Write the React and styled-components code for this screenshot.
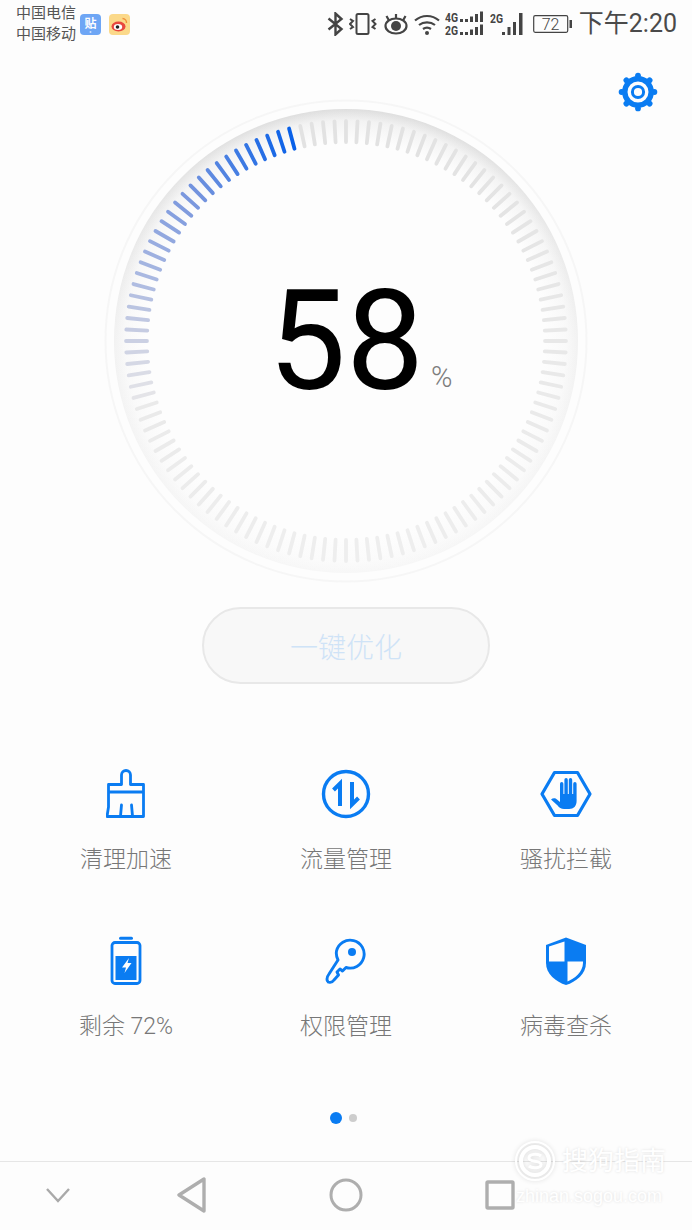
import React from "react";
import styled, { createGlobalStyle } from "styled-components";

const BLUE = "#0a7cf2";
const CJK = `Roboto, "Noto Sans CJK SC", sans-serif`;

const Global = createGlobalStyle`
  html, body { margin: 0; padding: 0; background: #fdfdfd; }
  body { font-family: ${CJK}; }
`;

const Page = styled.div`
  position: relative;
  width: 692px;
  height: 1230px;
  background: #fdfdfd;
  overflow: hidden;
  display: flex;
  flex-direction: column;
`;

const StatusBar = styled.header`
  height: 48px;
  flex: none;
  display: flex;
  align-items: center;
  padding: 0 15px 0 16px;
  color: #444;
`;
const Carriers = styled.div`
  font-size: 15px;
  line-height: 21px;
  color: #555;
  margin-right: 4px;
`;
const AppBadge = styled.div`
  width: 21px;
  height: 21px;
  margin-right: 8px;
`;
const StatusRight = styled.div`
  margin-left: auto;
  display: flex;
  align-items: center;
`;
const Time = styled.span`
  font-size: 25px;
  line-height: 48px;
  color: #4a4a4a;
  margin-left: 7px;
  white-space: nowrap;
`;

const SettingsRow = styled.div`
  height: 50px;
  flex: none;
  display: flex;
  justify-content: flex-end;
  align-items: center;
  padding: 0 34px 0 0;
  margin-top: 19px;
  margin-bottom: -20px;
  position: relative;
  z-index: 1;
`;

const Gauge = styled.div`
  width: 484px;
  height: 484px;
  flex: none;
  align-self: center;
  position: relative;
  margin-top: 2px;
`;
const GaugeValue = styled.div`
  position: absolute;
  left: 0;
  right: 0;
  top: 0;
  bottom: 0;
  display: flex;
  justify-content: center;
  align-items: center;
`;
const Number = styled.span`
  font-family: Roboto, sans-serif;
  font-weight: 400;
  font-size: 139px;
  line-height: 1;
  color: #000;
`;
const Percent = styled.span`
  position: absolute;
  left: 327px;
  top: 264px;
  font-size: 29px;
  font-weight: 300;
  line-height: 1;
  color: #7c7c7c;
`;

const Optimize = styled.button`
  align-self: center;
  margin-top: 24px;
  width: 288px;
  height: 77px;
  flex: none;
  border-radius: 39px;
  border: 2px solid #e8e8e8;
  background: #f8f8f8;
  color: #cfe3f7;
  font-family: ${CJK};
  font-size: 28px;
  font-weight: 300;
  padding: 0;
`;

const Grid = styled.div`
  display: grid;
  grid-template-columns: repeat(3, 220px);
  justify-content: center;
  grid-auto-rows: 167px;
  margin-top: 80px;
`;
const Tile = styled.div`
  display: flex;
  flex-direction: column;
  align-items: center;
`;
const IconBox = styled.div`
  width: 60px;
  height: 60px;
  display: flex;
  align-items: center;
  justify-content: center;
`;
const Label = styled.div`
  margin-top: 20px;
  font-size: 23px;
  line-height: 32px;
  color: #777;
  font-weight: 300;
  white-space: nowrap;
`;

const Dots = styled.div`
  display: flex;
  justify-content: center;
  align-items: center;
  gap: 7px;
  margin-top: 14px;
  height: 12px;
  padding-right: 5px;
`;
const Dot = styled.span`
  display: block;
  width: ${(p) => (p.$active ? 12 : 8)}px;
  height: ${(p) => (p.$active ? 12 : 8)}px;
  border-radius: 50%;
  background: ${(p) => (p.$active ? BLUE : "#cdcdcd")};
`;

const NavBar = styled.nav`
  margin-top: auto;
  height: 69px;
  flex: none;
  border-top: 1px solid #e6e6e6;
  display: grid;
  grid-template-columns: 115px 154px 154px 154px 115px;
  align-items: center;
  justify-items: center;
  padding-bottom: 2px;
  box-sizing: border-box;
`;

const Watermark = styled.div`
  position: absolute;
  left: 514px;
  top: 1140px;
  width: 160px;
  color: #fff;
  text-shadow: 0 0 3px rgba(0,0,0,.13);
  pointer-events: none;
`;
const WmTop = styled.div`
  display: flex;
  align-items: center;
  gap: 6px;
  font-size: 26px;
  line-height: 40px;
`;
const WmUrl = styled.div`
  font-family: "Liberation Sans", sans-serif;
  font-size: 18px;
  line-height: 20px;
  margin-top: 4px;
  margin-left: 2px;
  white-space: nowrap;
`;

function GaugeArt() {
  const c = 242;
  const ticks = [];
  for (let i = 0; i < 120; i++) {
    const deg = i * 3;
    const from = 255;
    const to = 345;
    const sin = Math.sin((deg * Math.PI) / 180);
    const cos = Math.cos((deg * Math.PI) / 180);
    const grey = Math.round(226 + (1 - cos) * 0.5 * 12);
    let stroke = `rgb(${grey},${grey},${grey})`;
    if (deg >= from && deg <= to) {
      const t = (deg - from) / (to - from);
      const s = [228, 228, 232], a = [198, 204, 226], m = [120, 150, 222], e = [8, 96, 232];
      let mix;
      if (t < 0.2) mix = s.map((v, k) => v + (a[k] - v) * (t / 0.2));
      else if (t < 0.65) mix = a.map((v, k) => v + (m[k] - v) * ((t - 0.2) / 0.45));
      else mix = m.map((v, k) => v + (e[k] - v) * ((t - 0.65) / 0.35));
      stroke = `rgb(${mix.map(Math.round).join(",")})`;
    }
    ticks.push(
      <line
        key={i}
        x1={c + 199 * sin}
        y1={c - 199 * cos}
        x2={c + 220 * sin}
        y2={c - 220 * cos}
        stroke={stroke}
        strokeWidth="3.8"
        strokeLinecap="round"
      />
    );
  }
  return (
    <svg width="484" height="484" viewBox="0 0 484 484" style={{ display: "block" }}>
      <defs>
        <linearGradient id="band" x1="0" y1="0" x2="0" y2="1">
          <stop offset="0" stopColor="#dedede" />
          <stop offset="0.5" stopColor="#f2f2f2" />
          <stop offset="1" stopColor="#f7f7f7" />
        </linearGradient>
        <radialGradient id="fade" cx="0.5" cy="0.5" r="0.5">
          <stop offset="0.86" stopColor="#fdfdfd" stopOpacity="1" />
          <stop offset="0.95" stopColor="#fdfdfd" stopOpacity="0.65" />
          <stop offset="1" stopColor="#fdfdfd" stopOpacity="0" />
        </radialGradient>
      </defs>
      <circle cx={c} cy={c} r="240.5" fill="none" stroke="#f6f6f6" strokeWidth="2" />
      <circle cx={c} cy={c} r="232" fill="url(#band)" />
      <circle cx={c} cy={c} r="232" fill="url(#fade)" />
      {ticks}
    </svg>
  );
}

const Gear = () => (
  <svg width="40" height="40" viewBox="0 0 40 40">
    <g fill={BLUE}>
      {[0, 45, 90, 135, 180, 225, 270, 315].map((a) => (
        <circle key={a} cx="20" cy="3.6" r="2.9" transform={`rotate(${a} 20 20)`} />
      ))}
    </g>
    <circle cx="20" cy="20" r="13.2" fill="none" stroke={BLUE} strokeWidth="5.4" />
    <circle cx="20" cy="20" r="5.6" fill="none" stroke={BLUE} strokeWidth="3" />
  </svg>
);

const Broom = () => (
  <svg width="40" height="50" viewBox="0 0 40 50" fill="none" stroke={BLUE} strokeWidth="2.8" strokeLinejoin="round" strokeLinecap="round">
    <path d="M2.500 23V15.500H15.500V6a4.500 4.500 0 0 1 9 0V15.500H37.500V47.500H1L2.500 38V23H37.500" />
    <path d="M15.500 36L14.500 47M25.500 36L26.500 47" />
  </svg>
);

const Traffic = () => (
  <svg width="50" height="50" viewBox="0 0 50 50" fill="none" stroke={BLUE}>
    <circle cx="25" cy="25" r="22.500" strokeWidth="3.400" />
    <path d="M19 37V14.500L12.500 21" strokeWidth="4" />
    <path d="M31 13V35.500L37.500 29" strokeWidth="4" />
  </svg>
);

const HandShield = () => (
  <svg width="52" height="48" viewBox="0 0 52 48">
    <path d="M14.500 2.500H37.500L50 24 37.500 45.500H14.500L2 24Z" fill="none" stroke={BLUE} strokeWidth="3.200" strokeLinejoin="round" />
    <path fill={BLUE} d="M20 13.700a1.700 1.700 0 0 1 3.400 0V24h1V9.700a1.700 1.700 0 0 1 3.400 0V24h1V9.700a1.700 1.700 0 0 1 3.400 0V24h1V13.700a1.700 1.700 0 0 1 3.400 0V31c0 5-3 8-7.500 8h-5c-3 0-5-1.500-6.500-3.500L11 29.500c2-1.800 4.500-1.500 6 0L20 32Z" />
  </svg>
);

const Battery = () => (
  <svg width="32" height="50" viewBox="0 0 32 50" fill="none">
    <path d="M10.500 2.200H21.500" stroke={BLUE} strokeWidth="3" strokeLinecap="round" />
    <rect x="2" y="6.500" width="28" height="41" rx="3" stroke={BLUE} strokeWidth="2.800" />
    <rect x="5.500" y="20" width="21" height="24" fill={BLUE} />
    <path d="M19 22L12 31.500H16L14.500 37 21.500 27H17.500Z" fill="#fdfdfd" />
  </svg>
);

const Key = () => (
  <svg width="42" height="50" viewBox="0 0 42 50" fill="none" stroke={BLUE} strokeWidth="2.900" strokeLinejoin="round">
    <path d="M11.500 15A14 14 0 1 1 21 31.500L17.500 35 15 33 12 36 13.500 39 9 44C7 47 3 47 2.500 45 1.500 43 2.500 40 4 38L13 24C11.500 21 11 18 11.500 15Z" />
    <circle cx="27" cy="16" r="4" fill={BLUE} stroke="none" />
  </svg>
);

const Shield = () => (
  <svg width="42" height="50" viewBox="0 0 42 50">
    <path fill={BLUE} d="M21 1.500L41 9V27C41 38 31 46 21 49 11 46 1 38 1 27V9Z" />
    <path fill="#fdfdfd" d="M19.500 5.500V25.500H4V10.500ZM22.500 25.500H38V27C38 36 29 43 22.500 45.500Z" />
  </svg>
);

const Tieba = () => (
  <AppBadge>
    <svg width="21" height="21" viewBox="0 0 21 21">
      <rect width="21" height="21" rx="4" fill="#6ea6f5" />
      <text x="10.500" y="13.500" fontSize="12" textAnchor="middle" fill="#fff" fontFamily='"Noto Sans CJK SC"' fontWeight="700">贴</text>
      <circle cx="10.500" cy="18" r="1" fill="#cfe0fb" />
    </svg>
  </AppBadge>
);

const Weibo = () => (
  <AppBadge>
    <svg width="21" height="21" viewBox="0 0 21 21">
      <rect width="21" height="21" rx="4" fill="#fbd98a" />
      <ellipse cx="9.500" cy="12.500" rx="7" ry="5" fill="#e8473f" />
      <ellipse cx="9" cy="13" rx="4.200" ry="3" fill="#fff" />
      <circle cx="8.500" cy="13" r="1.800" fill="#222" />
      <path d="M13.500 4.500a4 4 0 0 1 4 4.500" fill="none" stroke="#f0913c" strokeWidth="1.400" />
    </svg>
  </AppBadge>
);

const Ic = styled.svg`
  display: block;
  flex: none;
  margin-left: ${(p) => p.$ml || 0}px;
`;

const NetLabel = ({ y, children }) => (
  <text x="0" y={y} fontSize="12" fontWeight="700" fill="#444" fontFamily="Roboto" textLength="13" lengthAdjust="spacingAndGlyphs">{children}</text>
);

const StatusIcons = () => (
  <>
    <Ic width="17" height="24" viewBox="0 0 17 24" fill="none" stroke="#444" strokeWidth="2.400">
      <path d="M1.500 6.500L14.500 17 8.500 22.500V1.500L14.500 7 1.500 17.500" />
    </Ic>
    <Ic $ml={5} width="28" height="24" viewBox="0 0 28 24" fill="none" stroke="#444">
      <rect x="7.500" y="2" width="12" height="20" rx="1.500" strokeWidth="2" />
      <path d="M1 7l3 2-3 3 3 3-3 2M26.500 7l-3 2 3 3-3 3 3 2" strokeWidth="2" />
    </Ic>
    <Ic $ml={7} width="24" height="22" viewBox="0 0 24 22" fill="none" stroke="#444" strokeWidth="2.200">
      <ellipse cx="12" cy="13" rx="10.500" ry="7.500" />
      <circle cx="12" cy="13" r="5" fill="#444" stroke="none" />
      <path d="M2.500 3L5 7.500M12 1V5.500M21.500 3L19 7.500" />
    </Ic>
    <Ic $ml={6} width="26" height="22" viewBox="0 0 26 22" fill="none" stroke="#444" strokeWidth="2.200">
      <path d="M1 7.500C8 1.500 18 1.500 25 7.500M5 12c4.500-3.600 11.500-3.600 16 0M9 16c2.500-1.800 5.500-1.800 8 0" />
      <circle cx="13" cy="20" r="2" fill="#444" stroke="none" />
    </Ic>
    <Ic $ml={5} width="38" height="26" viewBox="0 0 38 26">
      <NetLabel y={11}>4G</NetLabel>
      <NetLabel y={24}>2G</NetLabel>
      {[0, 13].map((dy) => (
        <g key={dy} fill="#444">
          <rect x="15" y={8 + dy} width="3" height="3" />
          <rect x="20" y={8 + dy} width="3" height="3" />
          <rect x="25" y={5.500 + dy} width="3" height="5.500" />
          <rect x="30" y={3 + dy} width="3" height="8" />
          <rect x="35" y={0.500 + dy} width="3" height="10.500" />
        </g>
      ))}
    </Ic>
    <Ic $ml={7} width="33" height="24" viewBox="0 0 33 24">
      <NetLabel y={11}>2G</NetLabel>
      <g fill="#444">
        <rect x="12" y="20" width="3" height="3" />
        <rect x="17.500" y="15" width="3" height="8" />
        <rect x="23" y="10" width="3" height="13" />
        <rect x="29" y="1" width="3.500" height="22" />
      </g>
    </Ic>
    <Ic $ml={10} width="39" height="20" viewBox="0 0 39 20">
      <rect x="0.700" y="1.700" width="34" height="16.600" rx="1.500" fill="none" stroke="#444" strokeWidth="1.200" />
      <text x="17.500" y="16" fontSize="16" textAnchor="middle" fill="#444" fontFamily="Roboto" fontWeight="300">72</text>
      <rect x="36.500" y="6" width="2.500" height="8" fill="#444" />
    </Ic>
  </>
);

const Logo = () => (
  <svg width="42" height="42" viewBox="0 0 42 42" fill="none" stroke="#fff" style={{ filter: "drop-shadow(0 0 2px rgba(0,0,0,.14))", flex: "none" }}>
    <circle cx="21" cy="21" r="19" strokeWidth="2" />
    <circle cx="21" cy="21" r="14" strokeWidth="4" />
    <path d="M27 16c-3-2.500-12-2.500-12 2 0 5 12 1.500 12 6.500 0 4-9 4-12 1.500" strokeWidth="3" />
  </svg>
);

const items = [
  { label: "清理加速", Icon: Broom },
  { label: "流量管理", Icon: Traffic },
  { label: "骚扰拦截", Icon: HandShield },
  { label: "剩余 72%", Icon: Battery },
  { label: "权限管理", Icon: Key },
  { label: "病毒查杀", Icon: Shield },
];

export default function App() {
  return (
    <Page>
      <Global />
      <StatusBar>
        <Carriers>中国电信<br />中国移动</Carriers>
        <Tieba />
        <Weibo />
        <StatusRight>
          <StatusIcons />
          <Time>下午2:20</Time>
        </StatusRight>
      </StatusBar>
      <SettingsRow><Gear /></SettingsRow>
      <Gauge>
        <GaugeArt />
        <GaugeValue>
          <Number>58</Number>
          <Percent>%</Percent>
        </GaugeValue>
      </Gauge>
      <Optimize>一键优化</Optimize>
      <Grid>
        {items.map(({ label, Icon }) => (
          <Tile key={label}>
            <IconBox><Icon /></IconBox>
            <Label>{label}</Label>
          </Tile>
        ))}
      </Grid>
      <Dots><Dot $active /><Dot /></Dots>
      <NavBar>
        <svg width="26" height="16" viewBox="0 0 26 16" fill="none" stroke="#a9a9a9" strokeWidth="2.400"><path d="M2 2L13 14 24 2" /></svg>
        <svg width="30" height="36" viewBox="0 0 30 36" fill="none" stroke="#aeaeae" strokeWidth="3.400" strokeLinejoin="round"><path d="M27 2V34L2 18Z" /></svg>
        <svg width="34" height="34" viewBox="0 0 34 34" fill="none" stroke="#aeaeae" strokeWidth="3"><circle cx="17" cy="17" r="15" /></svg>
        <svg width="30" height="30" viewBox="0 0 30 30" fill="none" stroke="#aeaeae" strokeWidth="3.400" strokeLinejoin="round"><rect x="2" y="2" width="26" height="26" rx="1" /></svg>
        <span />
      </NavBar>
      <Watermark>
        <WmTop><Logo />搜狗指南</WmTop>
        <WmUrl>zhinan.sogou.com</WmUrl>
      </Watermark>
    </Page>
  );
}
